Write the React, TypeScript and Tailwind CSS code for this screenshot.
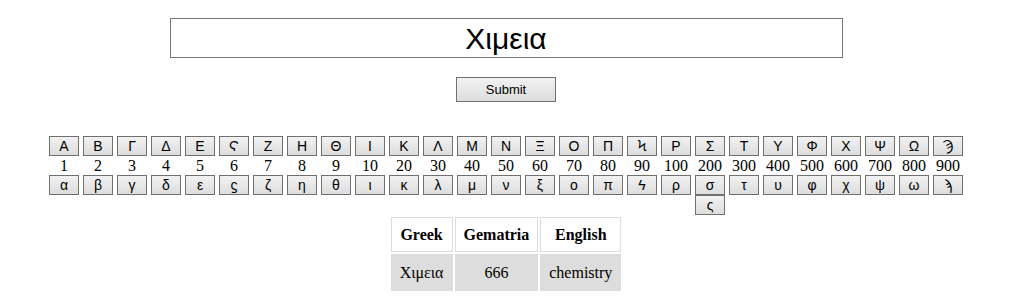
const upper = ["Α", "Β", "Γ", "Δ", "Ε", "Ϛ", "Ζ", "Η", "Θ", "Ι", "Κ", "Λ", "Μ", "Ν", "Ξ", "Ο", "Π", "Ϟ", "Ρ", "Σ", "Τ", "Υ", "Φ", "Χ", "Ψ", "Ω", "Ϡ"];
const lower = ["α", "β", "γ", "δ", "ε", "ϛ", "ζ", "η", "θ", "ι", "κ", "λ", "μ", "ν", "ξ", "ο", "π", "ϟ", "ρ", "σ", "τ", "υ", "φ", "χ", "ψ", "ω", "ϡ"];
const values = [1, 2, 3, 4, 5, 6, 7, 8, 9, 10, 20, 30, 40, 50, 60, 70, 80, 90, 100, 200, 300, 400, 500, 600, 700, 800, 900];

const LetterButton = ({ ch }: { ch: string }) => (
  <button className="w-[30px] h-[20px] border border-[#707070] bg-gradient-to-b from-[#f2f2f2] to-[#dddddd] text-[14px] leading-none text-black font-['Liberation_Sans','DejaVu_Sans',sans-serif] flex items-center justify-center">
    {ch}
  </button>
);

const App = () => {
  return (
    <div className="w-[1012px] flex flex-col items-center bg-white">
      <input
        defaultValue="Χιμεια"
        className="mt-[18px] w-[673px] h-[40px] border border-[#767676] text-center text-[30px] text-black font-['Liberation_Sans',sans-serif] outline-none"
      />
      <button className="mt-[19px] w-[100px] h-[25px] border border-[#707070] bg-gradient-to-b from-[#f2f2f2] to-[#dddddd] text-[13px] text-black font-['Liberation_Sans',sans-serif]">
        Submit
      </button>

      <div className="mt-[34px] flex gap-[4px]">
        {upper.map((u, i) => (
          <div key={u} className="flex flex-col items-center w-[30px]">
            <LetterButton ch={u} />
            <div className="h-[19px] leading-[19px] text-[16px] text-black font-['Liberation_Serif',serif] whitespace-nowrap">
              {values[i]}
            </div>
            <LetterButton ch={lower[i]} />
            {lower[i] === "σ" && <LetterButton ch="ς" />}
          </div>
        ))}
      </div>

      <table className="border-separate border-spacing-[2px] font-['Liberation_Serif',serif] text-[16px] text-black">
        <thead>
          <tr>
            <th className="h-[35px] px-[8px] border border-[#dddddd] bg-white font-bold">Greek</th>
            <th className="h-[35px] px-[8px] border border-[#dddddd] bg-white font-bold">Gematria</th>
            <th className="h-[35px] px-[8px] border border-[#dddddd] bg-white font-bold">English</th>
          </tr>
        </thead>
        <tbody>
          <tr>
            <td className="h-[37px] px-[8px] border border-[#dddddd] bg-[#dddddd] text-center">Χιμεια</td>
            <td className="h-[37px] px-[8px] border border-[#dddddd] bg-[#dddddd] text-center">666</td>
            <td className="h-[37px] px-[8px] border border-[#dddddd] bg-[#dddddd] text-center">chemistry</td>
          </tr>
        </tbody>
      </table>
    </div>
  );
};

export default App;
